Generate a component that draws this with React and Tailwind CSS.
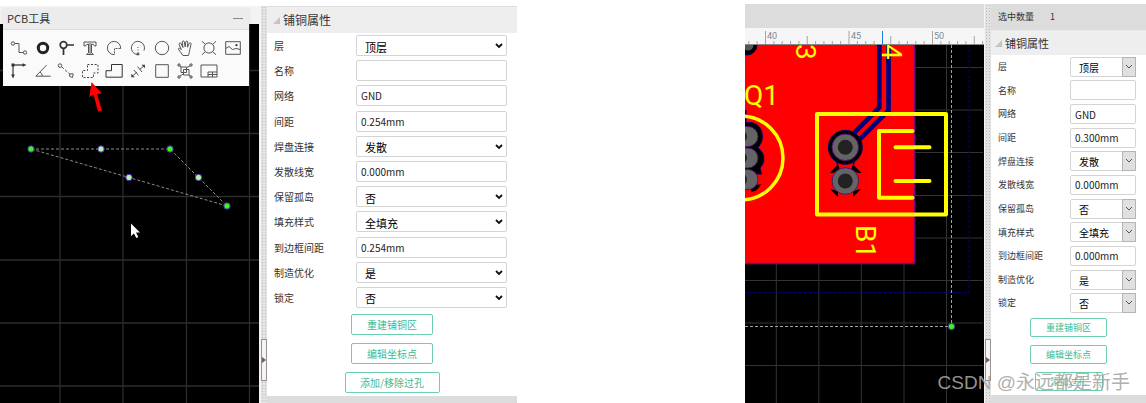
import { useState } from 'react';
import clsx from 'clsx';

const leftFields = [
  { id: 'layer', label: '层', type: 'select', value: '顶层', options: ['顶层', '底层'] },
  { id: 'name', label: '名称', type: 'text', value: '' },
  { id: 'net', label: '网络', type: 'text', value: 'GND' },
  { id: 'clearance', label: '间距', type: 'text', value: '0.254mm' },
  { id: 'pad', label: '焊盘连接', type: 'select', value: '发散', options: ['发散', '直连'] },
  { id: 'spoke', label: '发散线宽', type: 'text', value: '0.000mm' },
  { id: 'island', label: '保留孤岛', type: 'select', value: '否', options: ['是', '否'] },
  { id: 'fill', label: '填充样式', type: 'select', value: '全填充', options: ['全填充', '无填充'] },
  { id: 'border', label: '到边框间距', type: 'text', value: '0.254mm' },
  { id: 'optimize', label: '制造优化', type: 'select', value: '是', options: ['是', '否'] },
  { id: 'locked', label: '锁定', type: 'select', value: '否', options: ['是', '否'] },
];

const rightValues = { clearance: '0.300mm', border: '0.000mm' };
const rightFields = leftFields.map((f) => ({ ...f, value: rightValues[f.id] ?? f.value }));

const tools = [
  {
    name: '导线',
    icon: (
      <>
        <circle cx="3" cy="4.5" r="1.7" />
        <path d="M4.7 4.5H9V13.5H13.3" />
        <circle cx="15" cy="13.5" r="1.7" />
      </>
    ),
  },
  { name: '焊盘', icon: <circle cx="9" cy="9" r="4.7" strokeWidth="3" stroke="#222" /> },
  {
    name: '过孔',
    icon: (
      <g stroke="#333" strokeWidth="1.7">
        <circle cx="6.5" cy="6" r="3.3" />
        <path d="M10 6H17M6.5 9.5V16" />
      </g>
    ),
  },
  { name: '文本', icon: <path d="M3 3H15V7H13.5Q13 5 10.5 5V14L12.5 15.5H5.5L7.5 14V5Q5 5 4.5 7H3Z M9 4V15" /> },
  {
    name: '圆弧',
    icon: (
      <>
        <path d="M9.5 15.6A6.6 6.6 0 1 1 15.6 9.5" />
        <path d="M15.6 9.5H9.5V15.6" strokeDasharray="2 1" />
      </>
    ),
  },
  {
    name: '中心圆弧',
    icon: (
      <>
        <path d="M8 15.5A6.6 6.6 0 1 1 15 11.5" />
        <path d="M9 8V14.5" strokeDasharray="1 1.5" />
        <path d="M7.7 14.2H10.3V16.2H7.7Z" fill="#444" stroke="none" />
      </>
    ),
  },
  { name: '圆', icon: <circle cx="9" cy="9" r="6.7" /> },
  {
    name: '拖动',
    icon: (
      <path d="M7 16.5C5.8 14 3.5 12.5 2.3 10.2C2.3 8.8 3.9 8.9 5.3 10.8L3.1 5.2C3 3.6 4.7 3.5 5.2 4.8L7 8.5L6.2 3C6.4 1.6 8 1.5 8.3 2.8L9.2 8L9.8 2.8C10.3 1.6 11.7 1.8 11.8 3.1L11.5 8.2L13.2 4.4C14.2 3.3 15.4 4 15 5.4L13.8 10.5C13.5 13 13 14.5 12.4 16.5Z" />
    ),
  },
  {
    name: '通孔',
    icon: (
      <>
        <circle cx="9" cy="9" r="5.1" />
        <path d="M2 2.3L5.4 5.4M16 2.3L12.6 5.4M2 15.7L5.4 12.6M16 15.7L12.6 12.6" />
      </>
    ),
  },
  {
    name: '图片',
    icon: (
      <>
        <path d="M1.7 2.7H16.3V15.3H1.7Z M1.7 9.5L5 7.5L8.5 10.5L12 9.5L16.3 10.5" />
        <circle cx="12.5" cy="6.2" r="1.1" fill="#333" stroke="none" />
      </>
    ),
  },
  {
    name: '画布原点',
    icon: (
      <>
        <path d="M3 14V3H14" strokeWidth="1.4" />
        <path d="M1.2 12.5L3 16.5L4.8 12.5ZM12.5 1.2L16.5 3L12.5 4.8ZM1.5 1.5H4.5V4.5H1.5Z" fill="#333" stroke="none" />
      </>
    ),
  },
  { name: '量角器', icon: <path d="M12.5 3.2L1.8 14.2H16.6M6 10Q8.4 11.4 8.2 14" /> },
  {
    name: '连接焊盘',
    icon: (
      <>
        <circle cx="3" cy="3.6" r="1.8" />
        <path d="M4.7 4.8L13 12.3" strokeDasharray="3 1.5" />
        <path d="M12.7 11.9H16.2L15.5 15.5L12.6 14.3Z" />
      </>
    ),
  },
  { name: '铺铜', icon: <path d="M6.5 2.5H17V11H12.5V15.5H1.5V8.5H6.5Z" strokeDasharray="2 1.6" stroke="#444" /> },
  { name: '实心填充', icon: <path d="M6.5 2.5H17.2V15.2H1V8.7H6.5Z" stroke="#333" /> },
  {
    name: '尺寸',
    icon: (
      <>
        <path d="M3.5 14L8 10M10.5 7.5L15 4M5 8L9.5 13.5M8.5 4.5L13 10" />
        <path d="M2.2 11.8V15.2H5.8ZM12.4 2.8H16V6.2Z" fill="#444" stroke="none" />
      </>
    ),
  },
  { name: '矩形', icon: <path d="M2.7 2.7H15.3V15.3H2.7Z" /> },
  {
    name: '组合',
    icon: (
      <>
        <path d="M5 5H10.5V10.5H5ZM7.5 7.5H13V13H7.5Z" />
        <path d="M2 2H4V4H2ZM14 2H16V4H14ZM2 14H4V16H2ZM14 14H16V16H14ZM4 4L5 5M13 13L14 14M10.5 5.5L14 4M4 14L7.5 12" />
      </>
    ),
  },
  {
    name: '拼板',
    icon: <path d="M1 3H17V15H1ZM8 10H17M8 10V15M12.5 10V15M8 12.5H17" />,
  },
];

function ToolPanel() {
  return (
    <section className="absolute top-0.5 left-[3px] z-10 w-[246px] bg-[#fafafa] shadow">
      <header className="flex h-[22px] items-center justify-between border-b border-[#ddd] bg-[#ececec] px-1">
        <h2 className="text-[11px] text-[#333]">PCB工具</h2>
        <button aria-label="最小化" className="flex h-3 w-3 items-center">
          <span className="block h-px w-2.5 bg-[#888]" />
        </button>
      </header>
      <div className="grid grid-cols-10 px-1 pt-1.5 pb-1">
        {tools.map((tool) => (
          <button key={tool.name} aria-label={tool.name} className="flex h-[23px] items-center justify-center">
            <svg width="18" height="18" viewBox="0 0 18 18" fill="none" stroke="#555" strokeWidth="1">
              {tool.icon}
            </svg>
          </button>
        ))}
      </div>
    </section>
  );
}

function Splitter() {
  return (
    <div className="relative w-[6px] shrink-0 bg-[#e2e2e2] bg-[radial-gradient(#bdbdbd_1px,transparent_1px)] bg-size-[3px_3px]">
      <button
        aria-label="折叠面板"
        className="absolute bottom-[22px] left-0 flex h-[42px] w-[6px] items-center border border-[#9a9090] bg-[#f4f4f4]"
      >
        <svg width="4" height="6" viewBox="0 0 4 6" className="shrink-0">
          <path d="M0 0L4 3L0 6Z" fill="#6b6060" />
        </svg>
      </button>
    </div>
  );
}

function Field({ field, prefix, compact }) {
  const [value, setValue] = useState(field.value);
  const id = `${prefix}-${field.id}`;
  const isSelect = field.type === 'select';

  return (
    <div className="flex items-center">
      <label htmlFor={id} className={clsx('shrink-0 text-[#333]', compact ? 'w-[72px] text-[9px]' : 'w-[82px] text-[10px]')}>
        {field.label}
      </label>
      <div className={clsx('relative min-w-0 flex-1', compact ? 'h-5' : 'h-[21px]')}>
        {isSelect ? (
          <select
            id={id}
            value={value}
            onChange={(e) => setValue(e.target.value)}
            className={clsx(
              'block h-full w-full appearance-none rounded-xs border border-[#d4d4d4] bg-white px-2 pt-0.5 leading-4 text-black',
              compact ? 'text-[10px]' : 'text-[11px]'
            )}
          >
            {field.options.map((o) => (
              <option key={o}>{o}</option>
            ))}
          </select>
        ) : (
          <input
            id={id}
            type="text"
            value={value}
            onChange={(e) => setValue(e.target.value)}
            className="block h-full w-full rounded-xs border border-[#d4d4d4] bg-white px-1 text-[10px] text-[#222]"
          />
        )}
        {isSelect && !compact && (
          <svg className="pointer-events-none absolute top-2 right-1" width="8" height="6" viewBox="0 0 8 6">
            <path d="M1 1L4 4L7 1" fill="none" stroke="#111" strokeWidth="1.8" />
          </svg>
        )}
        {isSelect && compact && (
          <span className="pointer-events-none absolute inset-y-0 right-0 flex w-3.5 items-center justify-center border border-[#b4b4b4] bg-[#e0e0e0]">
            <svg width="8" height="6" viewBox="0 0 8 6" className="shrink-0">
              <path d="M1 1L4 4L7 1" fill="none" stroke="#555" strokeWidth="1" />
            </svg>
          </span>
        )}
      </div>
    </div>
  );
}

function ActionButton({ children, className }) {
  return (
    <button className={clsx('flex items-center justify-center rounded-xs border border-[#6bcfb0] bg-white text-[#3dba94]', className)}>
      {children}
    </button>
  );
}

function PanelTitle({ className }) {
  return (
    <h2 className={clsx('flex shrink-0 items-center gap-[3px] bg-[#eee] text-[#333]', className)}>
      <svg width="7" height="7" viewBox="0 0 7 7">
        <path d="M7 0V7H0Z" fill="#c4c4c4" />
      </svg>
      铺铜属性
    </h2>
  );
}

function Node({ x, y, mid }) {
  return <circle cx={x} cy={y} r="3.2" fill={mid ? '#b4f5ae' : '#3df61a'} stroke="#4d22b8" strokeWidth="1" />;
}

function OutlineCanvas() {
  return (
    <svg className="absolute inset-0 h-full w-full" viewBox="0 24 259 379" preserveAspectRatio="xMinYMin slice">
      <path
        d="M60 24V403M123 24V403M186.500 24V403M249.500 24V403M0 70.500H259M0 133.500H259M0 196.500H259M0 260H259M0 323H259M0 386H259"
        stroke="#2c2c2c"
        strokeWidth="1.300"
      />
      <path d="M31 149H170L227 206Z" fill="none" stroke="#8c8c8c" strokeDasharray="3 2" />
      <Node x={31} y={149} />
      <Node x={101} y={149} mid />
      <Node x={170} y={149} />
      <Node x={198.5} y={177.5} mid />
      <Node x={129} y={177.5} mid />
      <Node x={227} y={206} />
      <path d="M131 223.500V236L134 233.500L136.300 238L138.300 237L136 232.500H140Z" fill="#fff" />
    </svg>
  );
}

function RoundPad({ x, y }) {
  return (
    <>
      <circle cx={x} cy={y} r="13.300" fill="#646464" stroke="#4f1466" />
      <circle cx={x} cy={y} r="7.500" fill="#222" />
    </>
  );
}

function SlotPad({ y }) {
  return (
    <>
      <rect x="726" y={y - 10} width="32" height="20" rx="10" fill="#646464" stroke="#4f1466" />
      <circle cx="741" cy={y} r="6" fill="#222" />
    </>
  );
}

function BoardCanvas() {
  return (
    <svg className="absolute inset-0 h-full w-full" viewBox="745 45 239 358" preserveAspectRatio="xMinYMin slice">
      <path
        d="M776.300 45V403M818.800 45V403M861.300 45V403M904 45V403M946.500 45V403M745 67.500H983M745 110H983M745 152.500H983M745 195.500H983M745 238H983M745 280.500H983M745 323H983M745 365.500H983"
        stroke="#333"
      />
      <path d="M740 40H914.500V263.500H740Z" fill="#f00" stroke="#85007f" strokeWidth="1.500" />

      {/* tracks */}
      <path d="M879.300 40V107.500L845 142M888.500 40V110.500L850 149" fill="none" stroke="#00007d" strokeWidth="4.700" />
      <path d="M745 110V126" stroke="#00007d" strokeWidth="3" />

      {/* thermal reliefs and pads */}
      <circle cx="747" cy="45" r="10" fill="#000" stroke="#00005f" />
      <circle cx="748" cy="45" r="5.500" fill="#555" />
      <path d="M726 122.500H750A12 14 0 0 1 761 143L758 147.500L762 152A13 13 0 0 1 760 168L761.500 174H740Z" fill="#000" stroke="#00005f" />
      <path d="M751 186L761 184Q758 191 751 192Z" fill="#000" />
      <SlotPad y={136.5} />
      <SlotPad y={158} />
      <SlotPad y={179.5} />
      <path d="M837 162L838 168M854 162L853 168" stroke="#00007d" strokeWidth="1.500" />
      <circle cx="845.300" cy="147.300" r="17" fill="#000" stroke="#00005f" />
      <path d="M829.500 173L838 164.500L840 170L833 173ZM861.500 173L853 164.500L851 170L858 173ZM830 189L838 191V197ZM861 189L853 191V197Z" fill="#000" />
      <RoundPad x={845.3} y={147.3} />
      <RoundPad x={845.3} y={181} />

      {/* silkscreen */}
      <g fill="none" stroke="#ff0" strokeWidth="4" strokeLinejoin="round" strokeLinecap="round">
        <rect x="817" y="114" width="129" height="100.500" />
        <path d="M912.500 131H879V197.700H912.500M895.500 147.300H929.500M895.500 181H929.500" />
        <circle cx="741" cy="158" r="42" strokeWidth="3.500" />
      </g>
      <g fill="#ff0" fontFamily="Roboto, sans-serif" fontWeight="400" fontSize="28">
        <text x="744" y="105">Q1</text>
        <text transform="translate(856 225) rotate(90)">B1</text>
        <text transform="translate(796 44) rotate(90)">3</text>
        <text transform="translate(882 44) rotate(90)">4</text>
      </g>

      <path d="M969 45V292.500H745" fill="none" stroke="#000078" strokeDasharray="3 2" />
      <path d="M951.500 45V326.500H745" fill="none" stroke="#a0a0a0" strokeDasharray="3 2" />
      <Node x={951.5} y={326.5} />
    </svg>
  );
}

function Ruler() {
  const ticks = Array.from({ length: 29 }, (_, i) => i);

  return (
    <svg className="block h-[17px] w-full shrink-0 bg-[#f6f6f6]" viewBox="745 28 239 17" preserveAspectRatio="xMinYMin slice">
      {ticks.map((i) => {
        const x = 748.8 + i * 8.35;
        const major = (i - 2) % 10 === 0;
        const half = (i - 7) % 10 === 0;
        return <path key={i} d={`M${x} ${major ? 31 : half ? 36 : 41}V45`} stroke="#a5a5a5" />;
      })}
      <g fill="#7d8894" fontFamily="Roboto, sans-serif" fontSize="9">
        <text x="767" y="39">40</text>
        <text x="851" y="39">45</text>
        <text x="934" y="39">50</text>
      </g>
      <path d="M882.500 31V45" stroke="#1b80dc" />
      <path d="M745 44.500H984" stroke="#888" />
    </svg>
  );
}

export default function App() {
  return (
    <main className="relative grid min-h-screen grid-cols-[517fr_228fr_401fr] bg-white font-['Noto_Sans_CJK_SC',sans-serif]">
      <section className="flex min-w-0 pt-1.5">
        <div className="relative flex min-w-0 flex-1 flex-col">
          <div className="h-[18px] shrink-0 bg-[#f3f3f3]" />
          <ToolPanel />
          {/* pointer to the copper area tool */}
          <svg className="pointer-events-none absolute top-[76px] left-[88px] z-20" width="16" height="30" viewBox="88 82 16 30">
            <path d="M91.500 82L89.300 97L93.600 94.500L98 111.500L102 110.500L97 94L102 93.500Z" fill="#f00" />
          </svg>
          <div className="relative flex-1 overflow-hidden bg-black">
            <OutlineCanvas />
          </div>
        </div>
        <div className="w-0.5 bg-[#f4f4f4]" />
        <Splitter />
        <div className="flex w-[250px] flex-col">
          <PanelTitle className="h-[27px] border-t border-[#ddd] px-1.5 text-[12px]" />
          <form className="grid flex-1 auto-rows-fr pr-[10px] pl-[7px]" onSubmit={(e) => e.preventDefault()}>
            {leftFields.map((f) => (
              <Field key={f.id} field={f} prefix="left" />
            ))}
          </form>
          <div className="flex flex-col items-center gap-2 pt-1 pb-[3px] text-[10px]">
            <ActionButton className="h-[21px] w-[82px]">重建铺铜区</ActionButton>
            <ActionButton className="h-[21px] w-[82px]">编辑坐标点</ActionButton>
            <ActionButton className="h-[21px] w-[95px]">添加/移除过孔</ActionButton>
          </div>
          <div className="h-[7px] shrink-0 bg-[#dcdcdc]" />
        </div>
      </section>

      <section className="col-start-3 flex min-w-0 pt-1">
        <div className="flex min-w-0 flex-1 flex-col">
          <div className="h-6 shrink-0 bg-[#dcdcdc]" />
          <Ruler />
          <div className="relative flex-1 overflow-hidden bg-black">
            <BoardCanvas />
          </div>
        </div>
        <div className="w-px bg-[#f4f4f4]" />
        <Splitter />
        <div className="flex w-[155px] flex-col">
          <div className="flex h-[26px] shrink-0 items-center gap-4 bg-[#dcdcdc] pl-[7px] text-[9px] text-[#333]">
            <span>选中数量</span>
            <span>1</span>
          </div>
          <PanelTitle className="h-[25px] border-t border-[#e8e8e8] px-1 text-[11px]" />
          <form className="grid flex-1 auto-rows-fr pr-[10px] pl-[7px]" onSubmit={(e) => e.preventDefault()}>
            {rightFields.map((f) => (
              <Field key={f.id} field={f} prefix="right" compact />
            ))}
          </form>
          <div className="flex flex-col items-center gap-2 pt-[3px] pb-1 text-[9px]">
            <ActionButton className="h-[19px] w-[77px]">重建铺铜区</ActionButton>
            <ActionButton className="h-[19px] w-[77px]">编辑坐标点</ActionButton>
            <ActionButton className="h-[19px] w-[68px]">添加过孔</ActionButton>
          </div>
          <div className="h-2 shrink-0 bg-[#dcdcdc]" />
        </div>
      </section>

      <p className="pointer-events-none absolute right-4 bottom-2 font-['Liberation_Sans','Noto_Sans_CJK_SC',sans-serif] text-[19px] leading-6 text-[#a6a6a6]/90">
        CSDN @永远都是新手
      </p>
    </main>
  );
}
